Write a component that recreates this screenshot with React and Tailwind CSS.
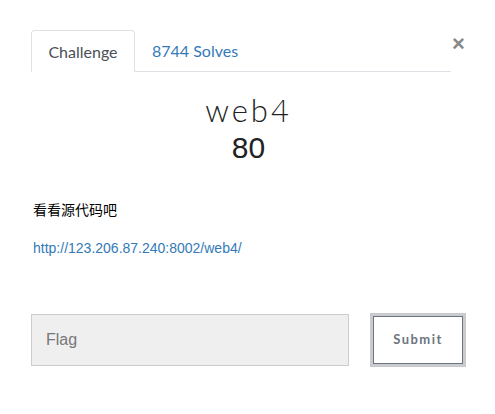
import React from "react";

function App() {
  return (
    <div className="w-[495px] h-[414px] bg-white relative font-['Lato',sans-serif]">
      <button className="absolute left-[452px] top-[33px] text-[22px] font-bold leading-none text-[#888] font-['Liberation_Sans',sans-serif]">
        ×
      </button>

      <div className="pt-[30px] pl-[31px] w-[466px]">
        {/* tabs */}
        <div className="flex items-end border-b border-[#dee2e6] h-[42px] mr-[15px]">
          <div className="h-[42px] w-[104px] -mb-px border border-[#dee2e6] border-b-white rounded-t-[4px] bg-white flex items-center justify-center pt-[1px] text-[16px] text-[#495057]">
            Challenge
          </div>
          <div className="h-[42px] flex items-center pt-[1px] pl-[17px] text-[16px] text-[#337ab7]">
            8744 Solves
          </div>
        </div>

        {/* header */}
        <div className="flex flex-col items-center mt-[18px]">
          <div className="text-[31px] leading-[40px] font-light tracking-[3px] text-[#222]">
            web4
          </div>
          <div className="text-[30px] leading-[36px] text-[#222] font-['Liberation_Sans',sans-serif]">80</div>
        </div>

        {/* description */}
        <div className="mt-[33px] pl-[2px] text-[14px] leading-[20px] text-black font-['Noto_Sans_CJK_SC',sans-serif]">
          看看源代码吧
        </div>
        <div className="mt-[19px] pl-[2px] text-[14px] text-[#337ab7] font-['Liberation_Sans',sans-serif]">
          http://123.206.87.240:8002/web4/
        </div>

        {/* submit row */}
        <div className="flex items-center mt-[54px]">
          <div className="w-[318px] h-[52px] bg-[#efefef] border border-[#ccc] flex items-center pl-[14px] text-[16px] text-[#777] font-['Liberation_Sans',sans-serif]">
            Flag
          </div>
          <div className="ml-[21px] w-[96px] h-[54px] border-[3px] border-[#c9cbce] bg-white">
            <div className="w-full h-full border border-[#6c757d] flex items-center justify-center text-[13px] font-bold tracking-[1.5px] text-[#6c757d]">
              Submit
            </div>
          </div>
        </div>
      </div>
    </div>
  );
}

export default App;
